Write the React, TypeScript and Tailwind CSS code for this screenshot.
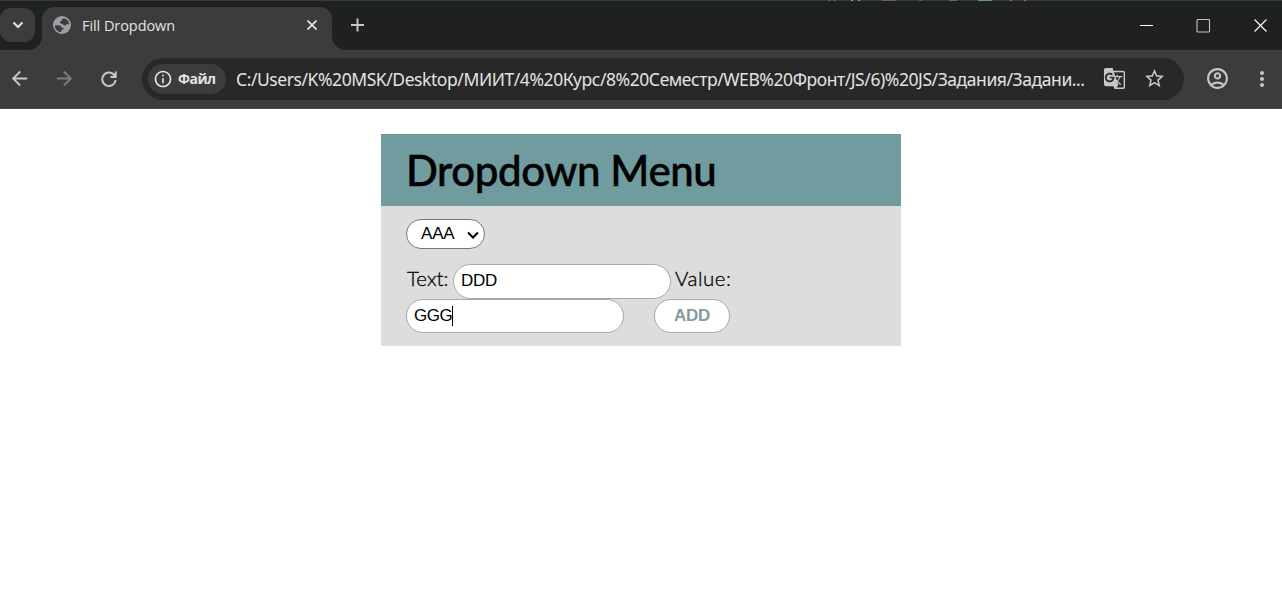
import React from "react";
import { MdArrowBack, MdArrowForward, MdInfoOutline, MdGTranslate, MdStarBorder, MdOutlineAccountCircle, MdMoreVert } from "react-icons/md";

const marks = [
  "ml-[828px] w-[3px] bg-[#5a6268]",
  "ml-[2px] w-[3px] bg-[#5a6268]",
  "ml-[15px] w-[2px] bg-[#7ea2c8]",
  "ml-[5px] w-[2px] bg-[#7ea2c8]",
  "ml-[22px] w-[14px] bg-[#5f646a]",
  "ml-[23px] w-[3px] bg-[#5a6268]",
  "ml-[27px] w-[8px] bg-[#646a70]",
  "ml-[21px] w-[14px] bg-[#6f9a6a]",
  "ml-[18px] w-[2px] bg-[#b0705c]",
  "ml-[12px] w-[2px] bg-[#b0705c]",
];

function Globe() {
  return (
    <svg className="ml-[11px] size-[18px] shrink-0" viewBox="0 0 18 18">
      <circle cx="9" cy="9" r="9" fill="#9aa0a6" />
      <path d="M11 2.200C9.500 3 8.700 3.500 8.600 4.600c-.1 1-1.800.7-1.800 1.700 0 1 .7 1.400 2 1.400 1.500 0 1.500 1.800 3 1.800 1.700 0 1.500-1.500 3-1.500.7 0 1.200.300 1.400.600C16 5.500 14 3 11 2.200zM1.900 9.200h3.600c2 0 3 1 3 2.500h1.700c.6 0 .6 1.800-.4 1.800-1.400 0-1.500.6-1.500 2.600C4.500 15.900 1.800 13 1.900 9.200z" fill="#3c3c3c" />
    </svg>
  );
}

function Reload() {
  return (
    <svg className="ml-[25px] size-4 shrink-0" viewBox="0 0 16 16" fill="none" stroke="currentColor" strokeWidth="2">
      <path d="M13.800 5A6.700 6.700 0 1 0 14.600 9" />
      <path d="M9.500 6H14.700V.500" />
      <path d="M11.500 5.500 14.500 2.500V5.500z" fill="currentColor" stroke="none" />
    </svg>
  );
}

function TabStrip() {
  return (
    <div className="flex h-12 items-stretch bg-[#1f2120] text-[#e3e3e3]">
      <div className="flex w-[42px]">
        <div className="mt-[6px] flex h-[34px] w-[35px] items-center justify-center rounded-[11px] bg-[#3c3c3c]">
          <svg width="12" height="8" viewBox="0 0 12 8" fill="none" stroke="#e3e3e3" strokeWidth="2"><path d="M1.500 1.500 6 6l4.500-4.500" /></svg>
        </div>
      </div>
      <div className="relative mt-[5px] flex w-[290px] items-center rounded-t-[12px] bg-[#3c3c3c] pb-[7px]">
        <svg className="absolute bottom-0 -left-[14px]" width="14" height="14"><path d="M14 0v14H0A14 14 0 0 0 14 0" fill="#3c3c3c" /></svg>
        <svg className="absolute -right-[14px] bottom-0" width="14" height="14"><path d="M0 0v14h14A14 14 0 0 1 0 0" fill="#3c3c3c" /></svg>
        <Globe />
        <span className="ml-[11px] flex-1 pt-px whitespace-nowrap font-['Open_Sans','Noto_Sans',sans-serif] text-[14.500px] tracking-[-0.070px]">Fill Dropdown</span>
        <svg className="mr-[15px]" width="10" height="10" viewBox="0 0 10 10" fill="none" stroke="currentColor" strokeWidth="1.700"><path d="M.5.5l9 9M9.500.5l-9 9" /></svg>
      </div>
      <svg className="mt-[16px] ml-[19px]" width="13" height="14" viewBox="0 0 13 14" fill="none" stroke="#c7c7c7" strokeWidth="1.900"><path d="M6.500.5v13M0 7h13" /></svg>
      <div className="ml-auto flex pt-[17px]">
        <svg width="142" height="14" viewBox="0 0 142 14" fill="none" stroke="#fff" strokeWidth="1.100">
          <path d="M0 6.500h13M114.500.5l12 12M126.500.5l-12 12" />
          <rect x="57" y=".5" width="12.500" height="12.500" rx="1" stroke="#c4c4c4" />
        </svg>
      </div>
    </div>
  );
}

function Toolbar() {
  return (
    <div className="flex h-[59px] items-center border-b border-[#4a4a4a] bg-[#3c3c3c] pb-px text-[#c7c7c7]">
      <MdArrowBack className="ml-[8px] size-[23px]" />
      <MdArrowForward className="ml-[22px] size-[23px] text-[#7c7c7c]" />
      <Reload />
      <div className="ml-[25px] flex h-[42px] w-[1042px] items-center rounded-full bg-[#282828] pl-[6px] text-[#e3e3e3]">
        <div className="flex h-[30px] w-[78px] items-center rounded-full bg-[#3c3c3c] pl-[5px]">
          <MdInfoOutline className="size-5" />
          <span className="ml-[5px] font-['Open_Sans','Noto_Sans',sans-serif] text-[14px] font-bold tracking-[-0.500px]">Файл</span>
        </div>
        <div className="ml-[10px] w-[860px] overflow-hidden pt-[2px] whitespace-nowrap font-['Noto_Sans','Open_Sans',sans-serif] text-[17.500px] tracking-[-0.430px]">
          C:/Users/K%20MSK/Desktop/МИИТ/4%20Курс/8%20Семестр/WEB%20Фронт/JS/6)%20JS/Задания/Задани...
        </div>
        <MdGTranslate className="ml-[7px] size-[23px] shrink-0 text-[#c7c7c7]" />
        <MdStarBorder className="ml-[17px] size-[23px] shrink-0 text-[#c7c7c7]" />
      </div>
      <MdOutlineAccountCircle className="ml-[21px] size-[25px]" />
      <MdMoreVert className="ml-[20px] size-6" />
    </div>
  );
}

function Page() {
  return (
    <main className="mx-auto mt-[25px] h-[212px] w-[520px] bg-[#ddd] text-black">
      <header className="flex h-[72px] items-center bg-[#709c9f] pl-[25px]">
        <h1 className="whitespace-nowrap font-[Lato,sans-serif] text-[42px] leading-[48px] font-medium tracking-[-0.420px] [-webkit-text-stroke:0.500px_#000]">Dropdown Menu</h1>
      </header>
      <section className="px-[25px] pt-[13px] font-['Liberation_Sans',sans-serif] text-[17px]">
        <div className="flex h-[30px] w-[79px] items-center rounded-full border border-[#767676] bg-white pl-[14px]">
          <span className="tracking-[-0.200px]">AAA</span>
          <svg className="mt-px ml-[13px] shrink-0" width="12" height="8" viewBox="0 0 12 8" fill="none" stroke="#000" strokeWidth="2"><path d="M1 1.500 6 6.500 11 1.500" /></svg>
        </div>
        <div className="mt-[15px] flex h-[35px]">
          <span className="w-[47px] pt-[2px] pl-px whitespace-nowrap font-[Lato,sans-serif] text-[20.500px] leading-[25px] font-light [-webkit-text-stroke:0.300px_#000]">Text:</span>
          <div className="flex h-[35px] w-[218px] items-center rounded-full border border-[#a9a9a9] bg-white pb-[2px] pl-[7px] tracking-[-0.300px]">DDD</div>
          <span className="ml-[4px] pt-[2px] whitespace-nowrap font-[Lato,sans-serif] text-[20.500px] leading-[25px] font-light tracking-[0.500px] [-webkit-text-stroke:0.300px_#000]">Value:</span>
        </div>
        <div className="flex h-[34px]">
          <div className="flex w-[218px] items-center rounded-full border border-[#a9a9a9] bg-white pl-[7px] tracking-[-0.500px]">GGG<i className="h-5 w-px bg-black" /></div>
          <button className="ml-[30px] w-[76px] rounded-full border border-[#a9a9a9] bg-white text-[17px] font-bold tracking-[-0.200px] text-[#88999f]">ADD</button>
        </div>
      </section>
    </main>
  );
}

export default function App() {
  return (
    <div className="h-[593px] w-[1282px] overflow-hidden bg-white">
      <div className="flex h-px bg-[#303b46]">
        {marks.map((m, i) => <i key={i} className={m} />)}
      </div>
      <div className="h-px bg-[#1f2120]" />
      <TabStrip />
      <Toolbar />
      <Page />
    </div>
  );
}
